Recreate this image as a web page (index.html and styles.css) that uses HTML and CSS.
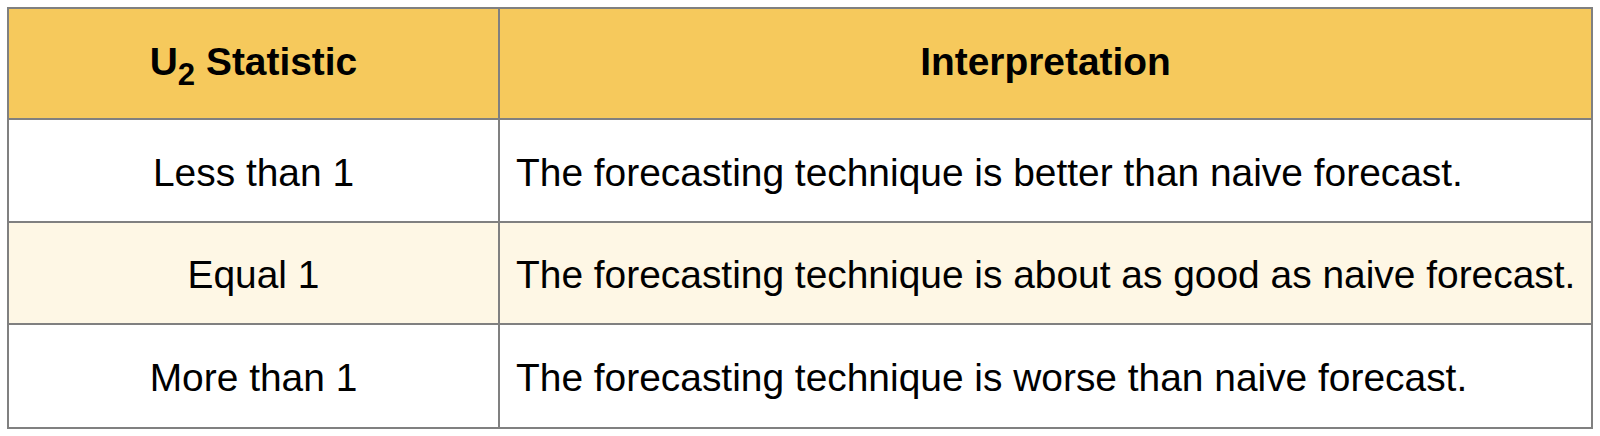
FILE: index.html
```html
<!DOCTYPE html>
<html lang="en">
<head>
<meta charset="utf-8">
<title>U2 Statistic</title>
<link rel="stylesheet" href="styles.css">
</head>
<body>
<div class="table" role="table">
  <div class="cell head center" role="columnheader"><span>U<sub>2</sub> Statistic</span></div>
  <div class="cell head center" role="columnheader"><span>Interpretation</span></div>

  <div class="cell body center" role="cell"><span>Less than 1</span></div>
  <div class="cell body left" role="cell"><span>The forecasting technique is better than naive forecast.</span></div>

  <div class="cell body alt center" role="cell"><span>Equal 1</span></div>
  <div class="cell body alt left" role="cell"><span>The forecasting technique is about as good as naive forecast.</span></div>

  <div class="cell body center" role="cell"><span>More than 1</span></div>
  <div class="cell body left" role="cell"><span>The forecasting technique is worse than naive forecast.</span></div>
</div>
</body>
</html>
```

FILE: styles.css
```css
html, body {
  background: #ffffff;
}
body {
  margin: 7px;
  font-family: "Liberation Sans", Arial, sans-serif;
  color: #000000;
}
.table {
  display: grid;
  grid-template-columns: 489px 1091px;
  grid-template-rows: 109px 101px 100px 102px;
  gap: 2px;
  padding: 2px;
  width: max-content;
  background: #808080;
}
.cell {
  display: flex;
  align-items: center;
  background: #ffffff;
  font-size: 38.9px;
  line-height: 1;
  white-space: nowrap;
}
.body {
  padding-top: 5px;
}
.center {
  justify-content: center;
}
.left {
  justify-content: flex-start;
  padding-left: 16px;
}
.head {
  background: #f6c95c;
  font-weight: bold;
  padding-bottom: 3px;
}
.alt {
  background: #fef7e5;
}
sub {
  font-size: 0.8em;
  vertical-align: -0.32em;
  line-height: 0;
}
```
